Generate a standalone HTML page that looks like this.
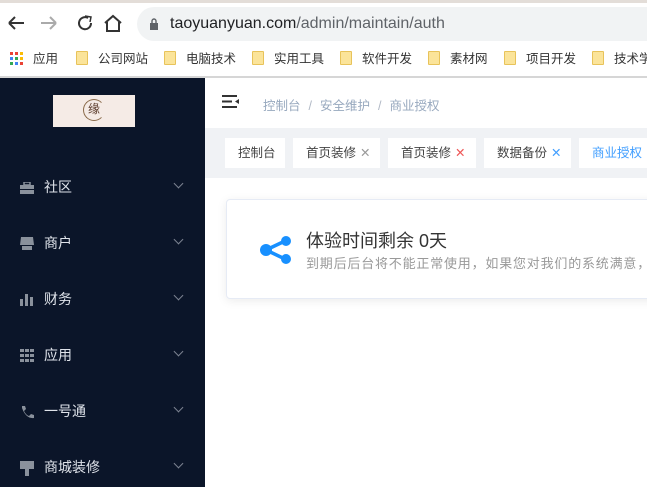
<!DOCTYPE html><html><head><meta charset="utf-8"><style>
*{margin:0;padding:0;box-sizing:border-box}
body{width:647px;height:487px;overflow:hidden;font-family:"Liberation Sans","Noto Sans CJK SC",sans-serif;background:#fff;position:relative}
.a{position:absolute}
.top{left:0;top:0;width:647px;height:3px;background:#e3ddd8}
.url{left:137px;top:7px;width:560px;height:34px;border-radius:17px;background:#f1f3f4;font-size:16px;color:#202124;line-height:34px;padding-left:33px}
.url span{color:#5f6368}
.bm{top:45px;height:28px;font-size:12.5px;color:#333;line-height:28px}
.fold{display:inline-block;width:12px;height:14px;background:#fbe49a;border:1px solid #e8c35a;border-radius:1px;vertical-align:-2px;margin-right:10px}
.side{left:0;top:78px;width:205px;height:409px;background:#0b1529}
.logo{left:53px;top:95px;width:82px;height:32px;background:#f5ebe6}
.mi{left:0;width:205px;height:20px;color:#dfe3ea;font-size:14px}
.mi .t{position:absolute;left:44px;top:0}
.mi .ic{position:absolute;left:20px;top:4px;width:14px;height:12px;background:#8a919c}
.mi .ar{position:absolute;left:175px;top:3px;width:7px;height:7px;border-right:1px solid #7b8290;border-bottom:1px solid #7b8290;transform:rotate(45deg)}
.crumb{left:263px;top:95px;font-size:12.5px;color:#97a8be}
.crumb i{font-style:normal;margin:0 8px;color:#b0b8c5}
.tags{left:205px;top:128px;width:442px;height:50px;background:#f0f2f5}
.tag{top:138px;height:30px;background:#fff;font-size:12.5px;color:#444;line-height:30px;padding-left:13px}
.tag b{font-weight:normal;color:#999;margin-left:4px}
.card{left:226px;top:199px;width:440px;height:100px;border:1px solid #e6ebf5;border-radius:4px;box-shadow:0 2px 10px rgba(0,0,0,.08);background:#fff}
</style></head><body>
<div class="a top"></div>
<svg class="a" style="left:8px;top:14px" width="120" height="20" fill="none" stroke-width="2">
<path d="M1 9h15M1 9l6-6M1 9l6 6" stroke="#333"/>
<path d="M33 9h15M48 9l-6-6M48 9l-6 6" stroke="#aaa"/>
<path d="M80 4a6 6 0 1 0 3 5" stroke="#333"/><path d="M77 2l6 1-1 5" stroke="#333" stroke-width="1.5"/>
<path d="M97 9l8-7 8 7M99 8v9h12v-9" stroke="#333"/>
</svg>
<div class="a url"><svg class="a" style="left:12px;top:11px" width="10" height="12"><rect x="1" y="5" width="8" height="7" fill="#5f6368"/><path d="M3 5V3a2 2 0 0 1 4 0v2" stroke="#5f6368" fill="none" stroke-width="1.4"/></svg>taoyuanyuan.com<span>/admin/maintain/auth</span></div>
<svg class="a" style="left:10px;top:52px" width="13" height="13">
<g><rect x="0" y="0" width="3" height="3" fill="#ea4335"/><rect x="5" y="0" width="3" height="3" fill="#ea4335"/><rect x="10" y="0" width="3" height="3" fill="#fbbc05"/><rect x="0" y="5" width="3" height="3" fill="#4285f4"/><rect x="5" y="5" width="3" height="3" fill="#34a853"/><rect x="10" y="5" width="3" height="3" fill="#fbbc05"/><rect x="0" y="10" width="3" height="3" fill="#34a853"/><rect x="5" y="10" width="3" height="3" fill="#4285f4"/><rect x="10" y="10" width="3" height="3" fill="#ea4335"/></g></svg>
<div class="a bm" style="left:33px">应用</div>
<div class="a bm" style="left:76px"><span class="fold"></span>公司网站</div>
<div class="a bm" style="left:164px"><span class="fold"></span>电脑技术</div>
<div class="a bm" style="left:252px"><span class="fold"></span>实用工具</div>
<div class="a bm" style="left:340px"><span class="fold"></span>软件开发</div>
<div class="a bm" style="left:428px"><span class="fold"></span>素材网</div>
<div class="a bm" style="left:504px"><span class="fold"></span>项目开发</div>
<div class="a bm" style="left:592px;white-space:nowrap"><span class="fold"></span>技术学习</div>
<div class="a" style="left:0;top:76px;width:647px;height:2px;background:#d6d6d6"></div>
<div class="a side"></div>
<div class="a logo"><div class="a" style="left:30px;top:4px;width:22px;height:22px;border-radius:50%;border:1.5px solid #8a6a4a;border-right-color:transparent;font-size:12px;color:#5a3a2a;text-align:center;line-height:19px">缘</div></div>
<div class="a mi" style="top:177px"><div class="ic" style="background:none"><svg width="14" height="12"><rect x="4" y="0" width="6" height="3" fill="none" stroke="#8a919c" stroke-width="1.5"/><rect x="0" y="3" width="14" height="4" fill="#8a919c"/><rect x="0" y="8" width="14" height="4" fill="#8a919c"/></svg></div><span class="t">社区</span><div class="ar"></div></div>
<div class="a mi" style="top:233px"><div class="ic" style="background:none"><svg width="14" height="13"><path d="M1 0h12l1 8H0z" fill="#8a919c"/><rect x="2" y="9" width="10" height="4" fill="#8a919c"/></svg></div><span class="t">商户</span><div class="ar"></div></div>
<div class="a mi" style="top:289px"><div class="ic" style="background:none"><svg width="14" height="12"><rect x="0" y="5" width="3" height="7" fill="#8a919c"/><rect x="5" y="0" width="3" height="12" fill="#8a919c"/><rect x="10" y="3" width="3" height="9" fill="#8a919c"/></svg></div><span class="t">财务</span><div class="ar"></div></div>
<div class="a mi" style="top:345px"><div class="ic" style="background:none"><svg width="14" height="13"><g fill="#8a919c"><rect x="0" y="0" width="4" height="3"/><rect x="5" y="0" width="4" height="3"/><rect x="10" y="0" width="4" height="3"/><rect x="0" y="5" width="4" height="3"/><rect x="5" y="5" width="4" height="3"/><rect x="10" y="5" width="4" height="3"/><rect x="0" y="10" width="4" height="3"/><rect x="5" y="10" width="4" height="3"/><rect x="10" y="10" width="4" height="3"/></g></svg></div><span class="t">应用</span><div class="ar"></div></div>
<div class="a mi" style="top:401px"><div class="ic" style="background:none"><svg width="14" height="14"><path d="M2 1l3 0 1 3-2 2q2 4 5 5l2-2 3 1v3q-8 1-12-10z" fill="#8a919c"/></svg></div><span class="t">一号通</span><div class="ar"></div></div>
<div class="a mi" style="top:457px"><div class="ic" style="height:8px"></div><div class="a" style="left:25px;top:12px;width:4px;height:7px;background:#8a919c"></div><span class="t">商城装修</span><div class="ar"></div></div>
<svg class="a" style="left:222px;top:95px" width="18" height="14"><path d="M0 1h15M0 6.5h10M0 12h15" stroke="#333" stroke-width="2"/><path d="M17 4l-4 2.5 4 2.5z" fill="#333"/></svg>
<div class="a crumb">控制台<i>/</i>安全维护<i>/</i>商业授权</div>
<div class="a tags"></div>
<div class="a tag" style="left:225px;width:60px">控制台</div>
<div class="a tag" style="left:293px;width:87px">首页装修<b>✕</b></div>
<div class="a tag" style="left:388px;width:88px">首页装修<b style="color:#e55">✕</b></div>
<div class="a tag" style="left:484px;width:87px">数据备份<b style="color:#409eff">✕</b></div>
<div class="a tag" style="left:579px;width:80px;color:#409eff">商业授权<b>✕</b></div>
<div class="a card"></div>
<svg class="a" style="left:259px;top:233px" width="34" height="34"><path d="M7 17L26 8M7 17l19 9" stroke="#1890ff" stroke-width="3.5"/><circle cx="7" cy="17" r="6" fill="#1890ff"/><circle cx="27" cy="8" r="5" fill="#1890ff"/><circle cx="27" cy="26" r="5" fill="#1890ff"/></svg>
<div class="a" style="left:306px;top:227px;font-size:18px;color:#333;white-space:nowrap">体验时间剩余 0天</div>
<div class="a" style="left:306px;top:253px;font-size:13px;letter-spacing:0.8px;color:#999;white-space:nowrap">到期后后台将不能正常使用，如果您对我们的系统满意，</div>
</body></html>
